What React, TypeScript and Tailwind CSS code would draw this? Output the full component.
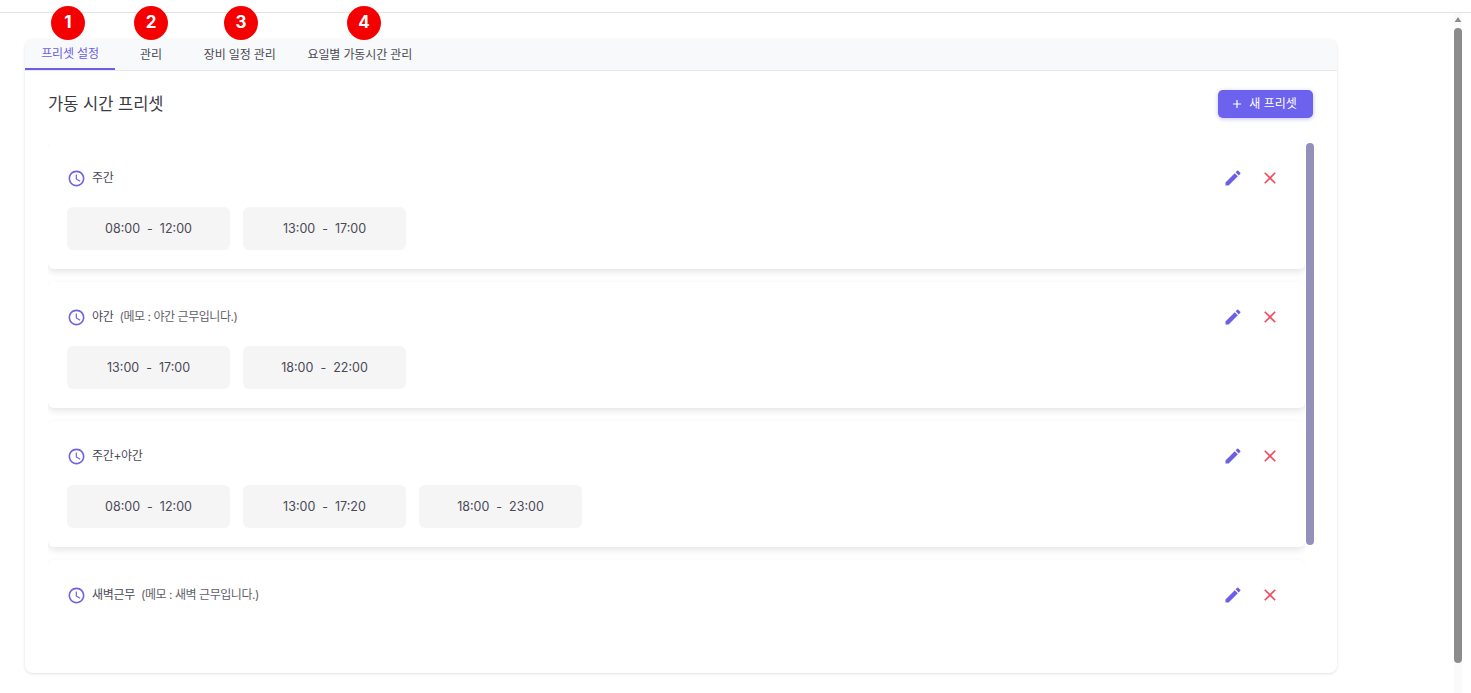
import { MdAccessTime, MdAdd, MdClose, MdEdit } from "react-icons/md";

type Preset = {
  name: string;
  memo?: string;
  times: string[][];
};

const presets: Preset[] = [
  { name: "주간", times: [["08:00", "12:00"], ["13:00", "17:00"]] },
  { name: "야간", memo: "(메모 : 야간 근무입니다.)", times: [["13:00", "17:00"], ["18:00", "22:00"]] },
  { name: "주간+야간", times: [["08:00", "12:00"], ["13:00", "17:20"], ["18:00", "23:00"]] },
  { name: "새벽근무", memo: "(메모 : 새벽 근무입니다.)", times: [] },
];

function Badge({ n, className }: { n: number; className: string }) {
  return (
    <span
      className={`absolute top-[-33px] flex h-[34px] w-[34px] items-center justify-center rounded-full bg-[#f50000] text-[17px] font-bold text-white ${className}`}
    >
      {n}
    </span>
  );
}

function PresetRow({ preset }: { preset: Preset }) {
  return (
    <div className="h-[126px] shrink-0 rounded-md bg-white px-[19px] pt-[25px] shadow-[0_3px_7px_rgba(0,0,0,0.1)]">
      <div className="flex h-5 items-center">
        <MdAccessTime size={19} className="ml-[-0.5px] text-[#6f62dc]" />
        <span className="ml-[6.5px] text-xs tracking-[-0.3px] text-[#4a4a55]">{preset.name}</span>
        {preset.memo && <span className="ml-[6px] text-xs tracking-[-0.45px] text-[#5f5f68]">{preset.memo}</span>}
        <div className="ml-auto flex items-center gap-[17px] pr-[6px]">
          <MdEdit size={20} className="text-[#6c5fe6]" />
          <MdClose size={20} className="text-[#ee4d5c]" />
        </div>
      </div>
      <div className="mt-[19px] flex gap-[13px]">
        {preset.times.map((t) => (
          <div
            key={t.join()}
            className="flex h-[43px] w-[163px] items-center justify-center gap-[7px] rounded-md bg-[#f5f5f6] pt-px text-[12.5px] text-[#4a4a55]"
          >
            <span>{t[0]}</span>
            <span>-</span>
            <span>{t[1]}</span>
          </div>
        ))}
      </div>
    </div>
  );
}

export default function App() {
  return (
    <div className="flex h-[693px] w-[1471px] flex-col overflow-hidden bg-white font-['Inter','Noto_Sans_CJK_KR',sans-serif]">
      <div className="h-[13px] shrink-0 border-b border-[#e3e3e3]" />
      <div className="flex min-h-0 flex-1">
        <main className="w-[1429px] shrink-0 pl-[25px] pt-[26px]">
          <div className="relative flex h-[634px] w-[1312px] flex-col rounded-lg bg-white shadow-[0_1px_3px_rgba(0,0,0,0.12)]">
            <Badge n={1} className="left-[26px]" />
            <Badge n={2} className="left-[109px]" />
            <Badge n={3} className="left-[199px]" />
            <Badge n={4} className="left-[322px]" />
            <nav className="flex h-8 shrink-0 rounded-t-lg border-b border-[#e7e8ea] bg-[#f8f9fa] text-xs tracking-[-0.15px] text-[#4a4a55]">
              <div className="flex w-[90px] items-center justify-center border-b-2 border-[#6c5fe6] text-[#6c5fe6]">
                프리셋 설정
              </div>
              <div className="ml-[25px] flex items-center">관리</div>
              <div className="ml-[42px] flex items-center">장비 일정 관리</div>
              <div className="ml-[32px] flex items-center">요일별 가동시간 관리</div>
            </nav>
            <div className="flex h-[72px] shrink-0 items-start justify-between pl-[23px] pr-6 pt-[19px]">
              <h1 className="text-[16.5px] font-normal leading-[28px] text-[#3b3b44]">가동 시간 프리셋</h1>
              <button className="flex h-7 w-[95px] items-center justify-center gap-[5px] rounded-[5px] bg-[#6c62ee] pr-1 text-xs text-white shadow-[0_1px_4px_rgba(108,98,238,0.4)]">
                <MdAdd size={14} />
                <span>새 프리셋</span>
              </button>
            </div>
            <div className="flex h-[478px] shrink-0 pl-[23px]">
              <div className="flex w-[1257px] shrink-0 flex-col gap-[13px] overflow-hidden">
                {presets.map((p) => (
                  <PresetRow key={p.name} preset={p} />
                ))}
              </div>
              <div className="ml-px h-[402px] w-2 rounded bg-[#9391b9]" />
            </div>
          </div>
        </main>
        <aside className="ml-[25px] flex w-2 shrink-0 flex-col items-center bg-[#fafafa]">
          <svg viewBox="0 0 8 6" className="mt-[4px] h-[5px] w-2 shrink-0 fill-[#8c8c8c]">
            <path d="M4 0 8 6H0z" />
          </svg>
          <div className="mt-[6px] h-[635px] w-2 rounded-sm bg-[#8c8c8c]" />
        </aside>
      </div>
    </div>
  );
}
